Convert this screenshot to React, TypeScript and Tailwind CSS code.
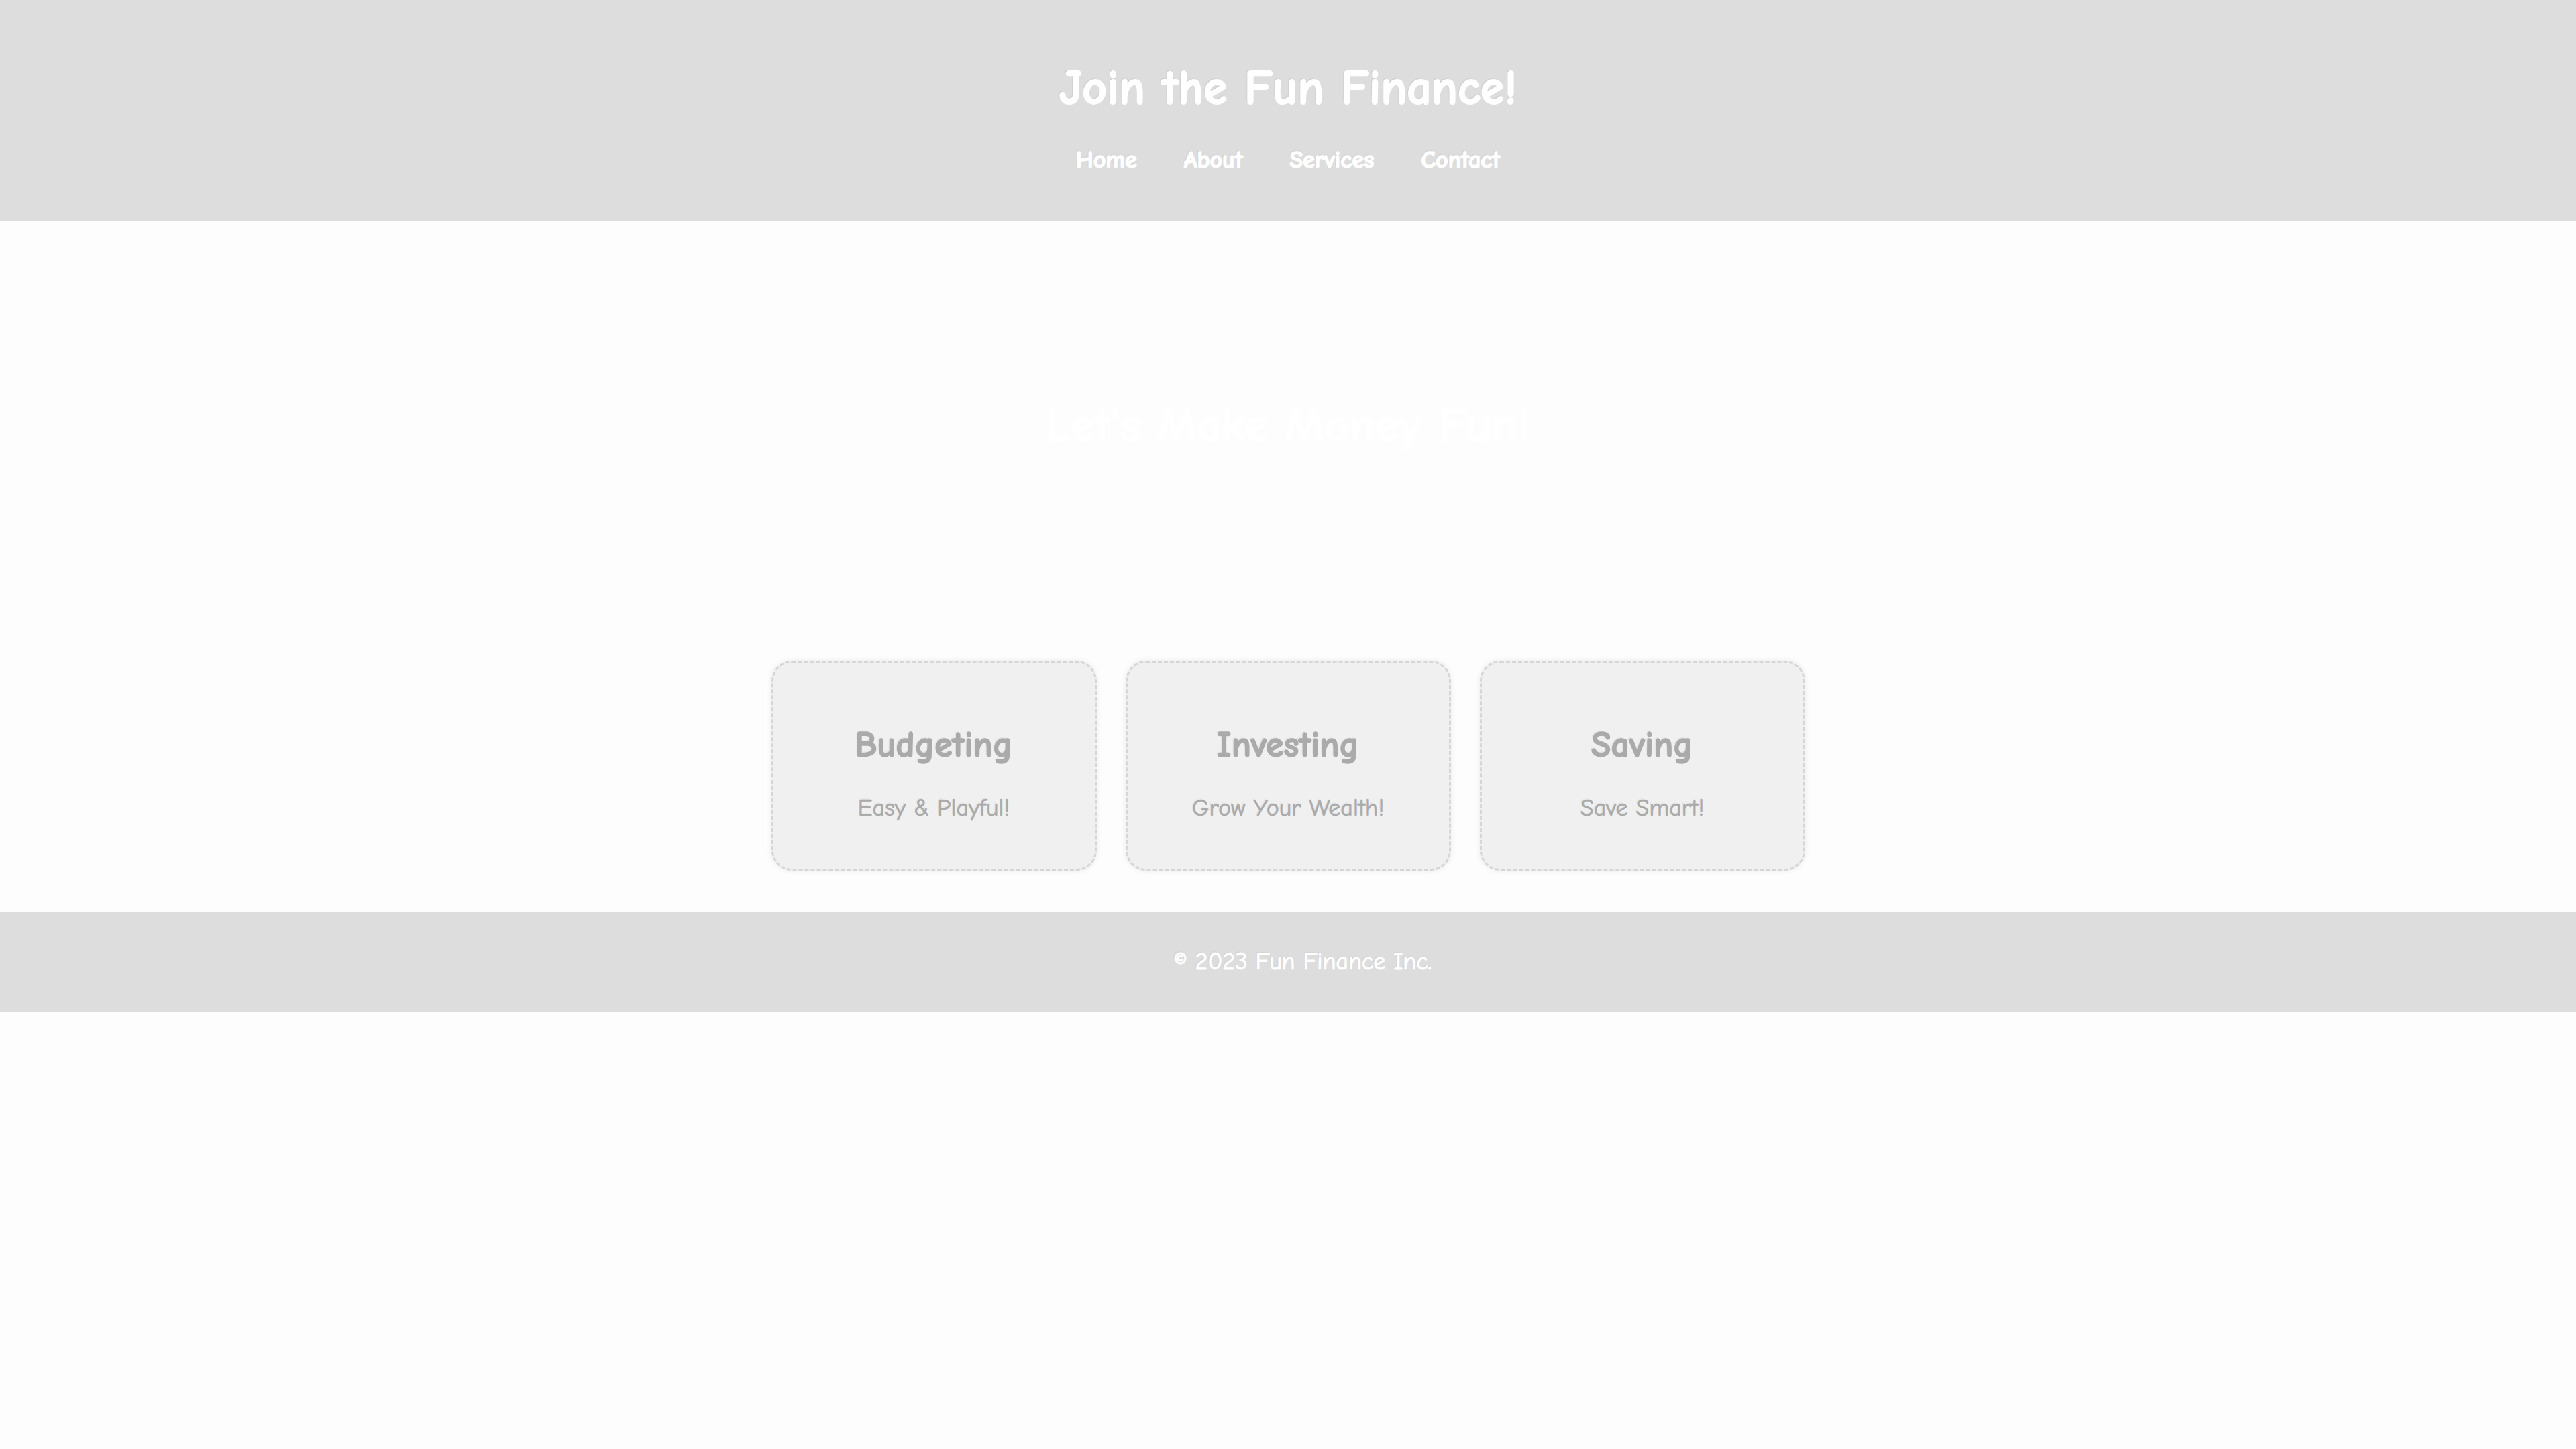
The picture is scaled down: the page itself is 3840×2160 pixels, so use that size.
const cards = [
  { title: 'Budgeting', text: 'Easy & Playful!' },
  { title: 'Investing', text: 'Grow Your Wealth!' },
  { title: 'Saving', text: 'Save Smart!' },
]

const navItems = ['Home', 'About', 'Services', 'Contact']

export default function App() {
  return (
    <div className="min-h-screen bg-[#fdfdfd] font-['Comic_Sans_MS','Comic_Neue',cursive] text-[36px]">
      {/* Header */}
      <header className="flex h-[330px] flex-col items-center bg-[#dddddd] pt-[82px] text-white">
        <h1 className="text-[72px] font-bold leading-[100px] [-webkit-text-stroke:2px_currentColor] [text-shadow:-2px_-2px_0_rgba(0,0,0,0.05)]">
          Join the Fun Finance!
        </h1>
        <nav className="mt-[32px] flex gap-[70px] text-[36px] font-bold leading-[50px]">
          {navItems.map(item => (
            <a key={item} href="#" className="[-webkit-text-stroke:1.5px_currentColor] [text-shadow:-2px_-2px_0_rgba(0,0,0,0.05)]">
              {item}
            </a>
          ))}
        </nav>
      </header>

      {/* Hero */}
      <section className="flex h-[610px] items-center justify-center">
        <h2 className="text-[72px] font-bold leading-[100px] text-white [-webkit-text-stroke:2px_currentColor]">
          Let&apos;s Make Money Fun!
        </h2>
      </section>

      {/* Cards */}
      <section className="flex justify-center gap-[43px] pt-[45px] pb-[62px]">
        {cards.map(c => (
          <div
            key={c.title}
            className="flex h-[313px] w-[485px] flex-col items-center justify-center rounded-[30px] border-[3px] border-dashed border-[#d6d6d6] bg-[#f0f0f0] pt-[22px] text-[#aaaaaa] shadow-[0_0_8px_rgba(0,0,0,0.08)]"
          >
            <h3 className="text-[54px] font-bold leading-[70px] [-webkit-text-stroke:1.5px_currentColor] [text-shadow:-2px_-2px_0_rgba(0,0,0,0.04)]">
              {c.title}
            </h3>
            <p className="mt-[34px] text-[36px] leading-[50px] [-webkit-text-stroke:0.75px_currentColor] [text-shadow:-2px_-2px_0_rgba(0,0,0,0.04)]">
              {c.text}
            </p>
          </div>
        ))}
      </section>

      {/* Footer */}
      <footer className="flex h-[148px] items-center justify-center bg-[#dddddd] text-white">
        <p className="ml-[44px] leading-[50px] [-webkit-text-stroke:1px_currentColor] [text-shadow:-2px_-2px_0_rgba(0,0,0,0.05)]">
          © 2023 Fun Finance Inc.
        </p>
      </footer>
    </div>
  )
}
